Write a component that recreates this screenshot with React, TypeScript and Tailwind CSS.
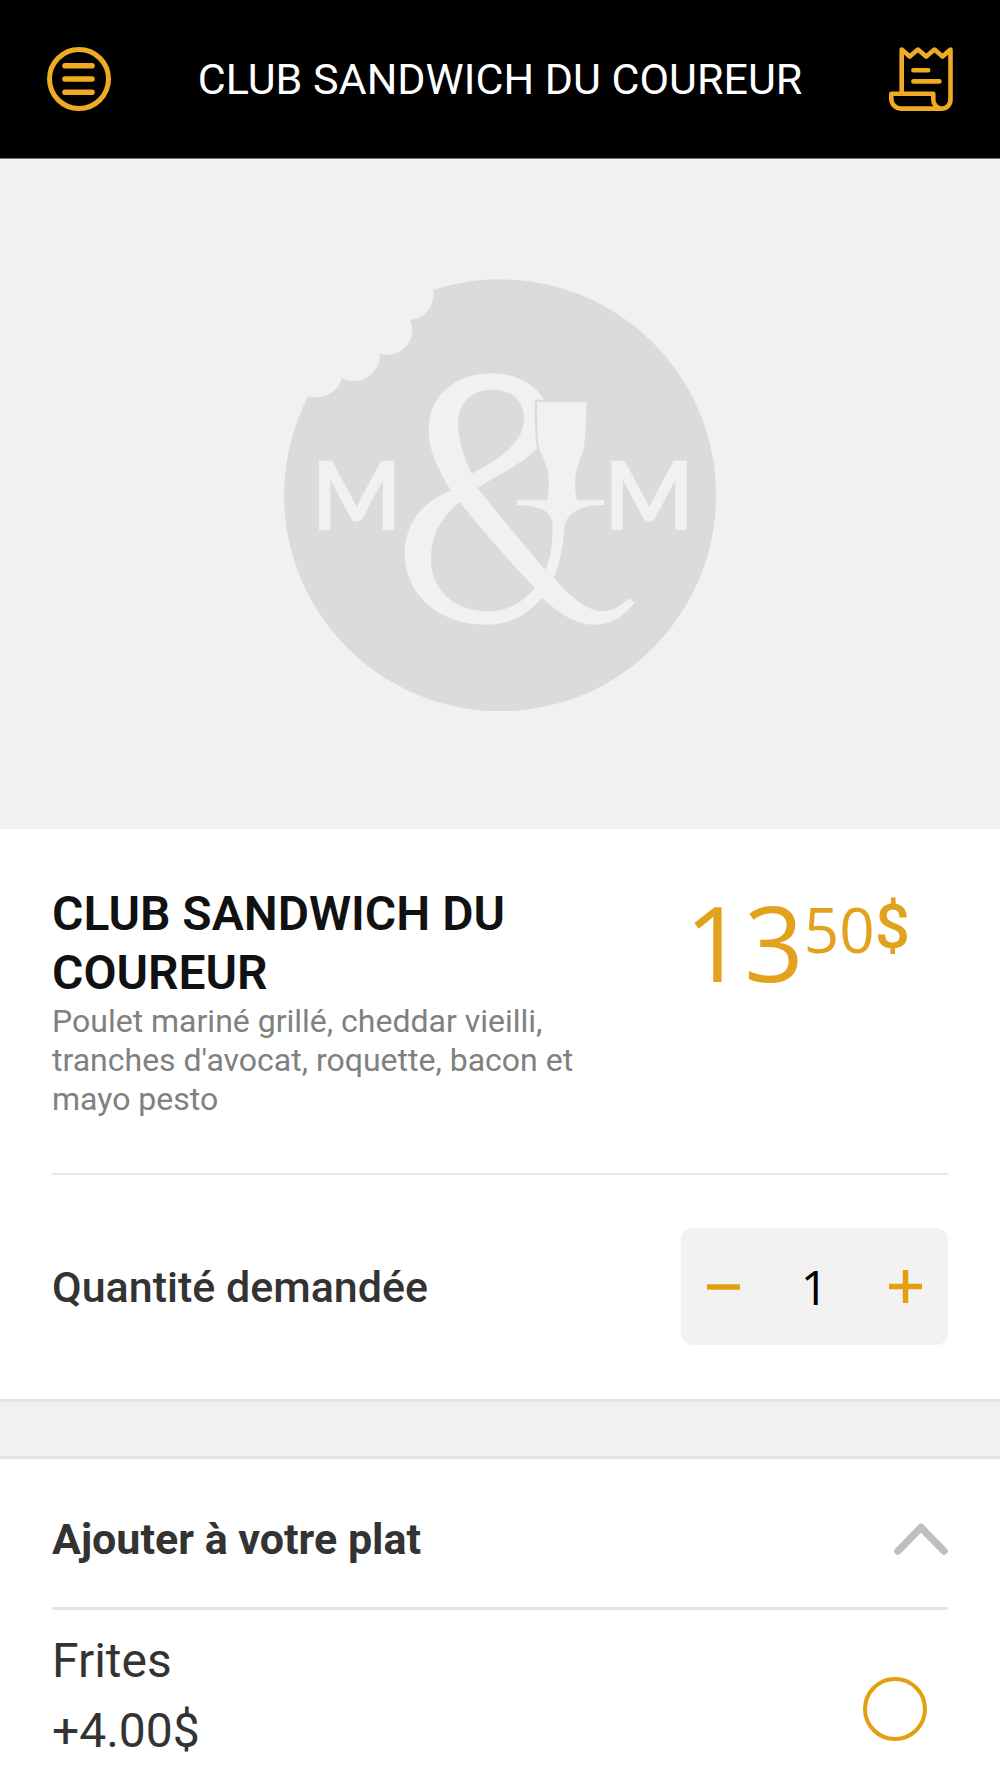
import React, { useState } from 'react';

interface Extra {
  id: string;
  name: string;
  price: string;
}

const EXTRAS: Extra[] = [
  { id: 'frites', name: 'Frites', price: '+4.00$' },
];

const MenuIcon = () => (
  <svg viewBox="0 0 64 64" className="w-16 h-16" fill="none" stroke="currentColor" strokeWidth="5" strokeLinecap="round">
    <circle cx="32" cy="32" r="29.5" />
    <path d="M18 18.7h27M18 32h27M18 45.3h27" strokeWidth="5.6" />
  </svg>
);

const ReceiptIcon = () => (
  <svg viewBox="0 0 64 64" className="w-16 h-16" fill="none" stroke="currentColor" strokeWidth="4.6" strokeLinecap="round" strokeLinejoin="round">
    <path d="M12.7 46V2.6l8 7 8.2-7 8.3 7 8.2-7 8.1 7 8-7v50.2a8.8 8.8 0 0 1-8.8 8.8H12A9.7 9.7 0 0 1 2.3 51.8v-5.1h42v6.2a8.6 8.6 0 0 0 8.4 8.6" />
    <path d="M24.4 23.3h14.8M24.4 34.4h26" />
  </svg>
);

const Logo = () => (
  <svg viewBox="284 279 432 433" className="w-[432px] max-w-full" role="img" aria-label="M&M">
    {/* bitten cookie */}
    <path
      fill="#dbdbdb"
      d="M433 291A216 216 0 1 1 308.300 397A26 26 0 0 0 341.700 379.300A26.500 26.500 0 0 0 380 354.500A24.500 24.500 0 0 0 410 321.300A26 26 0 0 0 433 291Z"
    />
    <g fill="#f1f1f1">
      <g fontFamily="Lato, sans-serif" fontSize="96" fontWeight="700" textAnchor="middle">
        <text x="356.500" y="531">M</text>
        <text x="649" y="531">M</text>
      </g>
      {/* ribbon emblem with the tray and the beer glass */}
      <g transform="translate(400 360) scale(0.33333)">
        <path
          fillRule="evenodd"
          d="M153 395C110 325 86 270 86 212C86 110 165 43 278 43C345 43 405 75 432 122H405C404 180 404 225 411 268C375 310 290 350 232 387C300 470 380 570 436 632C455 590 458 545 458 500C456 460 430 440 350 438V424H612V438C560 438 510 450 495 495C486 580 478 620 461 655C500 705 560 757 607 757C640 757 665 738 688 718L703 731C670 775 630 797 580 797C520 797 470 755 426 716C385 765 330 797 258 797C110 797 14 700 14 585C14 500 60 430 153 395ZM215 344C190 290 174 240 174 195C174 130 215 92 280 92C335 92 372 125 372 180C372 250 300 300 215 344ZM178 428C120 480 93 530 93 600C93 690 160 757 262 757C320 757 370 730 405 687C330 610 240 505 178 428Z"
        />
        <path d="M411 129H559C559 190 557 230 551 270C535 315 522 340 526 395C528 410 530 418 533 426H441C448 400 447 370 444 340C438 310 425 290 417 266C412 240 411 190 411 129Z" />
      </g>
    </g>
  </svg>
);

const App: React.FC = () => {
  const [quantity, setQuantity] = useState(1);
  const [open, setOpen] = useState(true);
  const [selected, setSelected] = useState<string[]>([]);

  const toggleExtra = (id: string) => {
    setSelected(prev => (prev.includes(id) ? prev.filter(item => item !== id) : [...prev, id]));
  };

  return (
    <div className="min-h-screen bg-white font-['Roboto',sans-serif] text-[#333333]">
      {/* Top bar */}
      <header className="flex items-center justify-between h-[159px] px-[47px] border-b border-[#777777] bg-black text-[#efab23]">
        <button type="button" aria-label="Menu">
          <MenuIcon />
        </button>
        <h1 className="text-[43px] leading-[50px] text-white">CLUB SANDWICH DU COUREUR</h1>
        <button type="button" aria-label="Commande">
          <ReceiptIcon />
        </button>
      </header>

      {/* Picture placeholder */}
      <div className="flex items-center justify-center h-[670px] bg-[#f1f1f1]">
        <Logo />
      </div>

      {/* Dish */}
      <section className="px-[52px]">
        <div className="flex items-start justify-between pt-[55px] pb-[54px] border-b-2 border-[#e8e8e8]">
          <div className="w-[540px]">
            <h2 className="text-[48px] leading-[59px] font-semibold text-[#111111]">CLUB SANDWICH DU COUREUR</h2>
            <p className="text-[32px] leading-[39px] text-[#808080]">
              Poulet mariné grillé, cheddar vieilli, tranches d'avocat, roquette, bacon et mayo pesto
            </p>
          </div>
          <div className="flex items-start mr-[38px] text-[#e2a21e] font-['Open_Sans',sans-serif]">
            <span className="text-[104px] leading-[116px]">13</span>
            <span className="text-[62px] leading-[90px]">50</span>
            <span className="text-[62px] leading-[86px] font-medium font-['Roboto',sans-serif]">$</span>
          </div>
        </div>

        <div className="flex items-center justify-between pt-[53px] pb-[54px]">
          <label htmlFor="quantity" className="text-[43px] leading-[50px] font-medium">Quantité demandée</label>
          <div className="flex items-center justify-between w-[267px] h-[117px] px-[26px] rounded-xl bg-[#f2f2f2] text-[#e2a010]">
            <button type="button" aria-label="Diminuer" onClick={() => setQuantity(q => Math.max(1, q - 1))}>
              <svg viewBox="0 0 33 33" className="w-[33px] h-[33px]" stroke="currentColor" strokeWidth="5.500">
                <path d="M0 17h33" />
              </svg>
            </button>
            <input
              id="quantity"
              type="text"
              inputMode="numeric"
              value={quantity}
              onChange={(e) => setQuantity(Number(e.target.value) || 1)}
              className="w-20 h-16 text-center text-[48px] leading-[64px] text-black font-['Open_Sans',sans-serif] outline-none"
            />
            <button type="button" aria-label="Augmenter" onClick={() => setQuantity(q => q + 1)}>
              <svg viewBox="0 0 33 33" className="w-[33px] h-[33px]" stroke="currentColor" strokeWidth="5.500">
                <path d="M0 16.500h33M16.500 0v33" />
              </svg>
            </button>
          </div>
        </div>
      </section>

      <div className="h-[60px] bg-[#f1f1f1] border-y-3 border-[#e4e4e4]" />

      {/* Extras */}
      <section className="px-[52px]">
        <button
          type="button"
          aria-expanded={open}
          onClick={() => setOpen(!open)}
          className="flex items-center justify-between w-full pt-[55px] pb-[43px] border-b-3 border-[#e4e4e4]"
        >
          <span className="text-[43px] leading-[50px] font-bold">Ajouter à votre plat</span>
          <svg viewBox="0 0 54 32" className="w-[54px] h-8" fill="none" stroke="#bfbfbf" strokeWidth="7.500" strokeLinecap="round" strokeLinejoin="round">
            <path d="M4 28L27 4.500L50 28" />
          </svg>
        </button>

        {open && EXTRAS.map((extra) => (
          <div key={extra.id} className="flex items-end justify-between pt-4 pb-[11px]">
            <label htmlFor={extra.id} className="text-[48px] leading-[70px]">
              <span className="block">{extra.name}</span>
              <span className="block">{extra.price}</span>
            </label>
            <input
              id={extra.id}
              type="checkbox"
              checked={selected.includes(extra.id)}
              onChange={() => toggleExtra(extra.id)}
              className="appearance-none w-16 h-16 mr-[21px] mb-[25px] rounded-full border-4 border-[#e2a010] checked:bg-[#e2a010]"
            />
          </div>
        ))}
      </section>
    </div>
  );
};

export default App;
